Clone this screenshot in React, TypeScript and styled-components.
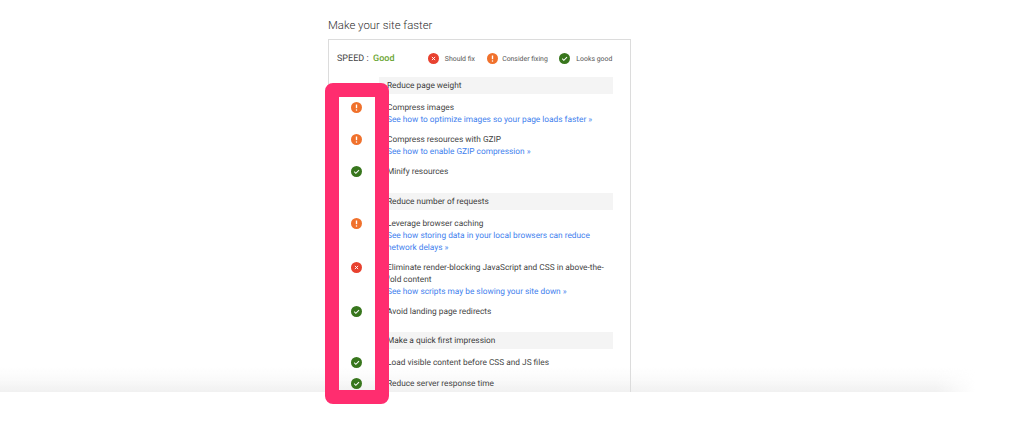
import React from "react";
import styled, { createGlobalStyle } from "styled-components";

const Global = createGlobalStyle`
  html, body { margin: 0; padding: 0; background: #fff; }
  body { font-family: Roboto, "Liberation Sans", sans-serif; text-rendering: geometricPrecision; }
`;

const Stage = styled.div`
  position: relative;
  width: 1016px;
  height: 446px;
  overflow: hidden;
  background: #fff;
`;

const Clip = styled.div`
  position: relative;
  height: 392px;
  overflow: hidden;
  padding: 18px 0 0 328px;
  box-sizing: border-box;
`;

const Heading = styled.h1`
  position: relative;
  margin: 0 0 6px;
  font-size: 11.4px;
  line-height: 15px;
  font-weight: 300;
  color: #333;
`;

const Card = styled.div`
  position: relative;
  width: 303px;
  box-sizing: border-box;
  border: 1px solid #dcdcdc;
  padding: 0 17px 40px 22px;
  height: 500px;
`;

const Summary = styled.div`
  display: flex;
  align-items: center;
  height: 37px;
  margin-left: -14px;
`;

const Speed = styled.div`
  font-size: 9px;
  color: #444;
  white-space: pre;
`;

const Good = styled.span`
  color: #6aa533;
  font-weight: 500;
`;

const Legend = styled.div`
  display: flex;
  align-items: center;
  margin-left: auto;
  margin-right: 0.7px;
`;

const LegendItem = styled.div<{ $iconGap: number }>`
  display: flex;
  align-items: center;
  gap: ${(p) => p.$iconGap}px;
  font-size: 6.9px;
  color: #555;
  & + & {
    margin-left: 11.6px;
  }
`;

const Section = styled.section`
  display: grid;
  grid-template-columns: 28px 1fr;
  row-gap: 8px;
  margin-bottom: 15px;
`;

const Bar = styled.div`
  grid-column: 2;
  box-sizing: border-box;
  height: 17px;
  padding: 1px 0 0 8px;
  line-height: 17px;
  margin-bottom: -1px;
  background: #f4f4f4;
  font-size: 8.3px;
  color: #3c3c3c;
`;

const IconCell = styled.div`
  height: 12px;
  padding-top: 0.5px;
  display: flex;
  align-items: center;
`;

const Body = styled.div`
  padding: 1px 0 0 8px;
  margin-bottom: -1px;
  font-size: 8.3px;
  line-height: 12px;
  color: #444;
  white-space: nowrap;
`;

const Tip = styled.a`
  display: block;
  color: #3f7fee;
  text-decoration: none;
`;

const Fade = styled.div`
  position: absolute;
  left: 0;
  width: 975px;
  bottom: 0;
  height: 26px;
  background: linear-gradient(to bottom, rgba(241, 241, 241, 0), rgba(241, 241, 241, 0.35) 50%, #f1f1f1);
  mask-image: linear-gradient(to right, #000 96%, transparent);
`;

const Frame = styled.div`
  position: absolute;
  left: 325px;
  top: 83px;
  width: 36px;
  height: 293px;
  border: 14px solid #ff2d6f;
  border-radius: 8px;
`;

type Kind = "fix" | "warn" | "ok";
const colors: Record<Kind, string> = { fix: "#e8412f", warn: "#f0712c", ok: "#38761d" };

const Icon = ({ kind }: { kind: Kind }) => (
  <svg width={11} height={11} viewBox="0 0 24 24" aria-hidden>
    <circle cx="12" cy="12" r="12" fill={colors[kind]} />
    {kind === "fix" && <path d="M8.5 8.5l7 7M15.5 8.5l-7 7" stroke="#fff" strokeWidth="2" fill="none" />}
    {kind === "warn" && (
      <>
        <path d="M12 5.5v8" stroke="#fff" strokeWidth="3" />
        <circle cx="12" cy="17.5" r="1.7" fill="#fff" />
      </>
    )}
    {kind === "ok" && <path d="M7 12.5l3.5 3.5L17.5 9" stroke="#fff" strokeWidth="2.2" fill="none" />}
  </svg>
);

type Row = { kind: Kind; lines: string[]; tip?: string[] };
type Group = { title: string; rows: Row[] };

const groups: Group[] = [
  {
    title: "Reduce page weight",
    rows: [
      { kind: "warn", lines: ["Compress images"], tip: ["See how to optimize images so your page loads faster »"] },
      { kind: "warn", lines: ["Compress resources with GZIP"], tip: ["See how to enable GZIP compression »"] },
      { kind: "ok", lines: ["Minify resources"] },
    ],
  },
  {
    title: "Reduce number of requests",
    rows: [
      { kind: "warn", lines: ["Leverage browser caching"], tip: ["See how storing data in your local browsers can reduce", "network delays »"] },
      { kind: "fix", lines: ["Eliminate render-blocking JavaScript and CSS in above-the-", "fold content"], tip: ["See how scripts may be slowing your site down »"] },
      { kind: "ok", lines: ["Avoid landing page redirects"] },
    ],
  },
  {
    title: "Make a quick first impression",
    rows: [
      { kind: "ok", lines: ["Load visible content before CSS and JS files"] },
      { kind: "ok", lines: ["Reduce server response time"] },
    ],
  },
];

export default function App() {
  return (
    <Stage>
      <Global />
      <Clip>
        <Fade />
        <Heading>Make your site faster</Heading>
        <Card>
          <Summary>
            <Speed>
              SPEED :  <Good>Good</Good>
            </Speed>
            <Legend>
              <LegendItem $iconGap={6}><Icon kind="fix" />Should fix</LegendItem>
              <LegendItem $iconGap={4.6}><Icon kind="warn" />Consider fixing</LegendItem>
              <LegendItem $iconGap={6}><Icon kind="ok" />Looks good</LegendItem>
            </Legend>
          </Summary>
          {groups.map((g) => (
            <Section key={g.title}>
              <Bar>{g.title}</Bar>
              {g.rows.map((r) => (
                <React.Fragment key={r.lines[0]}>
                  <IconCell><Icon kind={r.kind} /></IconCell>
                  <Body>
                    {r.lines.map((l) => <div key={l}>{l}</div>)}
                    {r.tip?.map((l) => <Tip key={l}>{l}</Tip>)}
                  </Body>
                </React.Fragment>
              ))}
            </Section>
          ))}
        </Card>
      </Clip>
      <Frame />
    </Stage>
  );
}
